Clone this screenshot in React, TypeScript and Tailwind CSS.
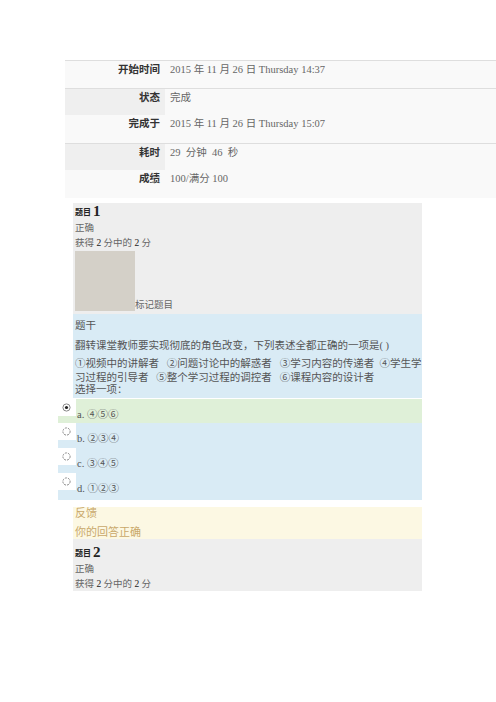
const serif = { fontFamily: '"Liberation Serif", "Noto Sans CJK SC", serif' };

const rows = [
  { label: '开始时间', value: '2015 年 11 月 26 日 Thursday 14:37', shade: false, line: true },
  { label: '状态', value: '完成', shade: true, line: true },
  { label: '完成于', value: '2015 年 11 月 26 日 Thursday 15:07', shade: false, line: false },
  { label: '耗时', value: '29  分钟  46  秒', shade: true, line: true },
  { label: '成绩', value: '100/满分 100', shade: false, line: false },
];

const options = [
  { key: 'a', text: '④⑤⑥', checked: true },
  { key: 'b', text: '②③④', checked: false },
  { key: 'c', text: '③④⑤', checked: false },
  { key: 'd', text: '①②③', checked: false },
];

function Radio({ checked }: { checked: boolean }) {
  return (
    <svg width="9" height="9" viewBox="0 0 9 9" className="mt-[4px] ml-[4px]">
      <circle cx="4.5" cy="4.5" r="3.6" fill="#fff" stroke="#888" strokeWidth="1" strokeDasharray={checked ? undefined : '2 1'} />
      {checked && <circle cx="4.5" cy="4.5" r="1.6" fill="#222" />}
    </svg>
  );
}

function QuestionHead({ num, top }: { num: number; top: string }) {
  return (
    <div className={`pl-[2px] ${top}`}>
      <div className="flex items-end h-[16px] text-[#222]">
        <span className="text-[8px] font-bold leading-[10px] mb-[1px]">题目</span>
        <span className="text-[15px] font-bold leading-[16px] ml-[2px]">{num}</span>
      </div>
      <div className="text-[9.5px] leading-[15px] text-[#666] mt-[2px]">正确</div>
      <div className="text-[9.5px] leading-[15px] text-[#666]">获得 <span className="text-[#222]">2</span> 分中的 <span className="text-[#222]">2</span> 分</div>
    </div>
  );
}

export default function App() {
  return (
    <div className="min-h-[702px] bg-white pt-[60px]" style={serif}>
      <div className="ml-[65px] w-[431px] bg-[#f9f9f9]">
        {rows.map((r) => (
          <div key={r.label} className={`flex h-[27.5px] ${r.line ? 'border-t border-[#dedede]' : ''}`}>
            <div className={`w-[100px] shrink-0 pr-[5px] pt-[1px] text-right text-[10.5px] font-bold text-[#333] ${r.shade ? 'bg-[#efefef]' : ''}`}>
              {r.label}
            </div>
            <div className="pl-[5px] pt-[1px] text-[10.5px] text-[#666] whitespace-pre">{r.value}</div>
          </div>
        ))}
      </div>

      <div className="ml-[73px] mt-[5px] w-[349px] bg-[#eeeeee] h-[111px]">
        <QuestionHead num={1} top="pt-0" />
        <div className="flex items-end pl-[2px]">
          <div className="w-[60px] h-[60px] bg-[#d4d0c8]" />
          <span className="text-[9.5px] leading-[11px] text-[#666]">标记题目</span>
        </div>
      </div>

      <div className="ml-[73px] w-[349px] h-[84px] bg-[#d9ebf5] pl-[2px] pt-[5px] text-[10.5px] text-[#555]">
        <div className="leading-[14px]">题干</div>
        <div className="leading-[14px] mt-[6px]">翻转课堂教师要实现彻底的角色改变，下列表述全都正确的一项是( )</div>
        <div className="leading-[14px] mt-[4px] whitespace-pre">①视频中的讲解者   ②问题讨论中的解惑者   ③学习内容的传递者  ④学生学</div>
        <div className="leading-[13px] whitespace-pre">习过程的引导者   ⑤整个学习过程的调控者   ⑥课程内容的设计者</div>
        <div className="leading-[12px]">选择一项：</div>
      </div>

      <div className="ml-[58px] w-[364px] mt-[1px]">
        {options.map((o, i) => (
          <div key={o.key} className={`flex ${i === 3 ? 'h-[27px]' : i === 0 ? 'h-[24px]' : 'h-[25px]'} ${o.checked ? 'bg-[#dff0d8]' : 'bg-[#d9ebf5]'}`}>
            <div className="w-[18px] h-[17px] bg-white shrink-0">
              <Radio checked={o.checked} />
            </div>
            <div className="pl-[1px] pt-[10px] text-[10.5px] leading-[12px] text-[#555]">
              {o.key}. {o.text}
            </div>
          </div>
        ))}
      </div>

      <div className="ml-[73px] mt-[7px] w-[349px] h-[32px] bg-[#fcf8e3] pl-[2px] text-[11px] text-[#c9a86a]">
        <div className="leading-[13px]">反馈</div>
        <div className="leading-[13px] mt-[6px]">你的回答正确</div>
      </div>

      <div className="ml-[73px] w-[349px] h-[52px] bg-[#eeeeee]">
        <QuestionHead num={2} top="pt-[5px]" />
      </div>
    </div>
  );
}
